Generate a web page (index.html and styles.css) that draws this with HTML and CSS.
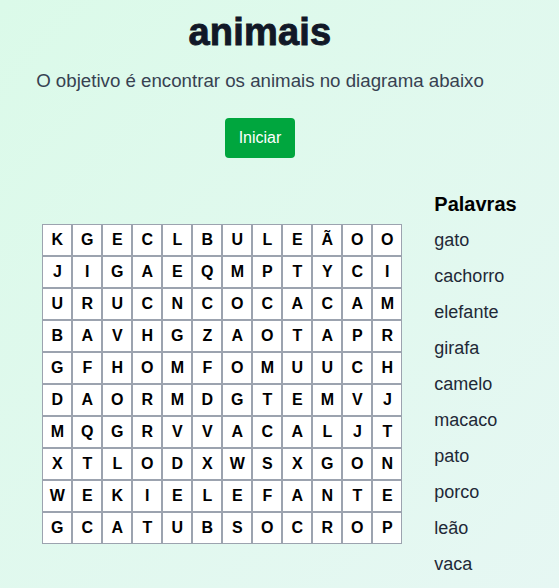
FILE: index.html
```html
<!DOCTYPE html>
<html lang="pt">
<head>
<meta charset="utf-8">
<title>animais</title>
<link rel="stylesheet" href="styles.css">
</head>
<body>
<main class="page">
  <header class="intro">
    <h1 class="title">animais</h1>
    <p class="subtitle">O objetivo é encontrar os animais no diagrama abaixo</p>
    <button class="start">Iniciar</button>
  </header>
  <section class="game">
    <table class="board">
      <tbody>
        <tr><td>K</td><td>G</td><td>E</td><td>C</td><td>L</td><td>B</td><td>U</td><td>L</td><td>E</td><td>Ã</td><td>O</td><td>O</td></tr>
        <tr><td>J</td><td>I</td><td>G</td><td>A</td><td>E</td><td>Q</td><td>M</td><td>P</td><td>T</td><td>Y</td><td>C</td><td>I</td></tr>
        <tr><td>U</td><td>R</td><td>U</td><td>C</td><td>N</td><td>C</td><td>O</td><td>C</td><td>A</td><td>C</td><td>A</td><td>M</td></tr>
        <tr><td>B</td><td>A</td><td>V</td><td>H</td><td>G</td><td>Z</td><td>A</td><td>O</td><td>T</td><td>A</td><td>P</td><td>R</td></tr>
        <tr><td>G</td><td>F</td><td>H</td><td>O</td><td>M</td><td>F</td><td>O</td><td>M</td><td>U</td><td>U</td><td>C</td><td>H</td></tr>
        <tr><td>D</td><td>A</td><td>O</td><td>R</td><td>M</td><td>D</td><td>G</td><td>T</td><td>E</td><td>M</td><td>V</td><td>J</td></tr>
        <tr><td>M</td><td>Q</td><td>G</td><td>R</td><td>V</td><td>V</td><td>A</td><td>C</td><td>A</td><td>L</td><td>J</td><td>T</td></tr>
        <tr><td>X</td><td>T</td><td>L</td><td>O</td><td>D</td><td>X</td><td>W</td><td>S</td><td>X</td><td>G</td><td>O</td><td>N</td></tr>
        <tr><td>W</td><td>E</td><td>K</td><td>I</td><td>E</td><td>L</td><td>E</td><td>F</td><td>A</td><td>N</td><td>T</td><td>E</td></tr>
        <tr><td>G</td><td>C</td><td>A</td><td>T</td><td>U</td><td>B</td><td>S</td><td>O</td><td>C</td><td>R</td><td>O</td><td>P</td></tr>
      </tbody>
    </table>
    <aside class="words">
      <h2 class="words-title">Palavras</h2>
      <ul class="words-list">
        <li>gato</li>
        <li>cachorro</li>
        <li>elefante</li>
        <li>girafa</li>
        <li>camelo</li>
        <li>macaco</li>
        <li>pato</li>
        <li>porco</li>
        <li>leão</li>
        <li>vaca</li>
      </ul>
    </aside>
  </section>
</main>
</body>
</html>
```

FILE: styles.css
```css
html, body {
  margin: 0;
  padding: 0;
}
body {
  min-height: 100vh;
  background: linear-gradient(to bottom right, #dbfae9, #e6f7f3);
  font-family: "Liberation Sans", Arial, sans-serif;
  color: #1f2937;
}
.page {
  display: flex;
  flex-direction: column;
  align-items: center;
  padding-top: 10px;
}
.intro {
  display: flex;
  flex-direction: column;
  align-items: center;
  padding-right: 39px;
}
.title {
  margin: 0;
  font-size: 38px;
  line-height: 44px;
  font-weight: 900;
  color: #111827;
  -webkit-text-stroke: 0.9px #111827;
  letter-spacing: 0.2px;
}
.subtitle {
  margin: 14px 0 0;
  font-size: 18.7px;
  line-height: 26px;
  color: #374151;
}
.start {
  margin-top: 24px;
  width: 70px;
  height: 40px;
  border: none;
  border-radius: 4px;
  background: #00a63e;
  color: #ffffff;
  font-family: "Liberation Sans", Arial, sans-serif;
  font-size: 16px;
  cursor: pointer;
}
.game {
  display: flex;
  align-items: center;
  gap: 32px;
  margin-top: 32px;
}
.board {
  border-collapse: separate;
  border-spacing: 0;
  border: 0;
}
.board td {
  width: 28px;
  height: 30px;
  padding: 0;
  border: 1px solid #9ca3af;
  background: #ffffff;
  text-align: center;
  vertical-align: middle;
  font-size: 16px;
  font-weight: 700;
  color: #000000;
}
.words-title {
  margin: 0 0 8px;
  font-size: 20px;
  line-height: 28px;
  font-weight: 700;
  color: #000000;
}
.words-list {
  list-style: none;
  margin: 0;
  padding: 0;
}
.words-list li {
  font-size: 18px;
  line-height: 28px;
  margin-bottom: 8px;
  color: #1f2937;
}
.words-list li:last-child {
  margin-bottom: 0;
}
```
